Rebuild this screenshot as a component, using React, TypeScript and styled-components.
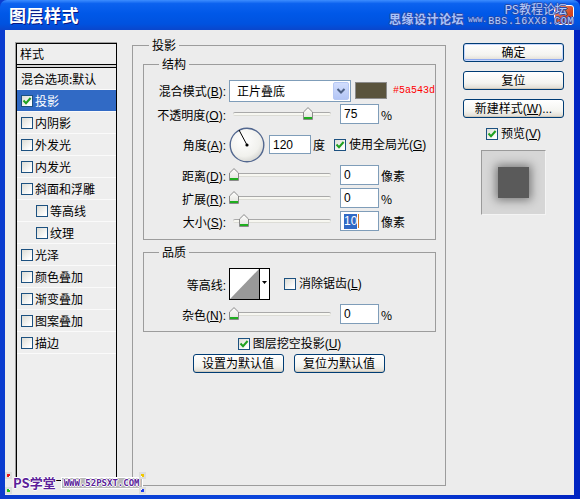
import styled, { createGlobalStyle } from "styled-components";

const FONT = `"Liberation Sans", "Noto Sans CJK SC", sans-serif`;

const GlobalStyle = createGlobalStyle`
  html, body { margin: 0; padding: 0; }
  body { background: #2f5fb8; font-family: ${FONT}; font-size: 12px; color: #000; }
  * { box-sizing: border-box; }
`;

interface StyleItem {
  name: string;
  checked?: boolean;
  active?: boolean;
  sub?: boolean;
}

const styleItems: StyleItem[] = [
  { name: "投影", checked: true, active: true },
  { name: "内阴影" },
  { name: "外发光" },
  { name: "内发光" },
  { name: "斜面和浮雕" },
  { name: "等高线", sub: true },
  { name: "纹理", sub: true },
  { name: "光泽" },
  { name: "颜色叠加" },
  { name: "渐变叠加" },
  { name: "图案叠加" },
  { name: "描边" },
];

const CheckMark = () => (
  <svg width="10" height="10" viewBox="0 0 10 10">
    <path d="M1.5 4.5 L4 7.2 L8.6 2" fill="none" stroke="#21a121" strokeWidth="2" />
  </svg>
);

const Checkbox = ({ checked, ml }: { checked?: boolean; ml?: number }) => (
  <CheckBox $ml={ml}>{checked && <CheckMark />}</CheckBox>
);

const ThumbIcon = () => (
  <svg width="10" height="13" viewBox="0 0 10 13">
    <defs>
      <linearGradient id="tg" x1="0" y1="0" x2="0" y2="1">
        <stop offset="0" stopColor="#ffffff" />
        <stop offset="1" stopColor="#e0e0da" />
      </linearGradient>
    </defs>
    <path d="M0.5 12.5 V5 L5 0.6 L9.5 5 V12.5 Z" fill="url(#tg)" stroke="#8a8a8a" />
    <rect x="1" y="10" width="8" height="2" fill="#1fae1f" />
  </svg>
);

const Slider = ({ left }: { left: number }) => (
  <SliderBox>
    <Track />
    <Thumb $left={left}>
      <ThumbIcon />
    </Thumb>
  </SliderBox>
);

const Dial = () => (
  <DialWrap>
    <svg width="36" height="36" viewBox="0 0 36 36">
      <defs>
        <radialGradient id="dg" cx="0.4" cy="0.35" r="0.7">
          <stop offset="0" stopColor="#ffffff" />
          <stop offset="0.7" stopColor="#f1f1ed" />
          <stop offset="1" stopColor="#d2d2ce" />
        </radialGradient>
      </defs>
      <circle cx="18" cy="18" r="16.8" fill="url(#dg)" stroke="#52678f" strokeWidth="1.4" />
      <line x1="18" y1="18" x2="10" y2="3" stroke="#000" strokeWidth="1" />
      <circle cx="18" cy="18" r="1.6" fill="#000" />
    </svg>
  </DialWrap>
);

const ContourIcon = () => (
  <svg width="41" height="32" viewBox="0 0 41 32">
    <rect x="0.5" y="0.5" width="40" height="31" fill="#fff" stroke="#000" />
    <polygon points="1,31 30,1 30,31" fill="#999" />
    <line x1="30.5" y1="0.5" x2="30.5" y2="31.5" stroke="#000" />
    <polygon points="33,13 38,13 35.5,16" fill="#000" />
  </svg>
);

const Chevron = () => (
  <svg width="10" height="8" viewBox="0 0 10 8">
    <path d="M1.5 2 L5 5.5 L8.5 2" fill="none" stroke="#4d6185" strokeWidth="2" />
  </svg>
);

const App = () => {
  return (
    <>
      <GlobalStyle />
      <Window>
        <TitleBar>
          <Title>图层样式</Title>
          <Mark>
            <SiteName>思缘设计论坛</SiteName>
            <Www>www.</Www>
            <MarkStack>
              <MarkTop>PS教程论坛</MarkTop>
              <MarkBottom>BBS.16XX8.COM</MarkBottom>
            </MarkStack>
          </Mark>
          <CloseBtn />
        </TitleBar>

        <Body>
          <StyleList>
            <ListInner>
              <ListHeader>样式</ListHeader>
              <ListDivider />
              <ListRows>
                <ListRow>混合选项:默认</ListRow>
                {styleItems.map((item) => (
                  <ListRow key={item.name} $active={item.active} $sub={item.sub}>
                    <Checkbox checked={item.checked} />
                    <ListText>{item.name}</ListText>
                  </ListRow>
                ))}
              </ListRows>
            </ListInner>
          </StyleList>

          <Group $h={448}>
            <Legend $ml={16}>投影</Legend>
            <GroupBody>
              <Group>
                <Legend $ml={15}>结构</Legend>
                <Rows>
                  <Row $h={21}>
                    <Label>混合模式(<u>B</u>):</Label>
                    <Select>
                      <span>正片叠底</span>
                      <DropBtn>
                        <Chevron />
                      </DropBtn>
                    </Select>
                    <Swatch />
                    <Hex>#5a543d</Hex>
                  </Row>
                  <Row $h={20}>
                    <Label>不透明度(<u>O</u>):</Label>
                    <Slider left={74} />
                    <Field>75</Field>
                    <Unit>%</Unit>
                  </Row>
                  <Row $h={35}>
                    <Label>角度(<u>A</u>):</Label>
                    <Dial />
                    <Field $w={42} $h={19} $ml={4}>120</Field>
                    <Unit>度</Unit>
                    <Checkbox checked ml={9} />
                    <CheckText>使用全局光(<u>G</u>)</CheckText>
                  </Row>
                  <Row $h={20}>
                    <Label>距离(<u>D</u>):</Label>
                    <Slider left={0} />
                    <Field>0</Field>
                    <Unit>像素</Unit>
                  </Row>
                  <Row $h={20}>
                    <Label>扩展(<u>R</u>):</Label>
                    <Slider left={0} />
                    <Field>0</Field>
                    <Unit>%</Unit>
                  </Row>
                  <Row $h={20}>
                    <Label>大小(<u>S</u>):</Label>
                    <Slider left={10} />
                    <Field>
                      <Selected>10</Selected>
                      <Caret />
                    </Field>
                    <Unit>像素</Unit>
                  </Row>
                </Rows>
              </Group>

              <Group $mt={5}>
                <Legend $ml={15}>品质</Legend>
                <QualityRows>
                  <Row $h={32}>
                    <Label>等高线:</Label>
                    <Contour>
                      <ContourIcon />
                    </Contour>
                    <Checkbox ml={14} />
                    <CheckText>消除锯齿(<u>L</u>)</CheckText>
                  </Row>
                  <Row $h={20}>
                    <Label>杂色(<u>N</u>):</Label>
                    <Slider left={0} />
                    <Field>0</Field>
                    <Unit>%</Unit>
                  </Row>
                </QualityRows>
              </Group>

              <CenterRow $mt={5}>
                <Checkbox checked />
                <CheckText>图层挖空投影(<u>U</u>)</CheckText>
              </CenterRow>
              <ButtonRow>
                <Button $w={91}>设置为默认值</Button>
                <Button $w={91}>复位为默认值</Button>
              </ButtonRow>
            </GroupBody>
          </Group>

          <Side>
            <Button $w={101} $default>确定</Button>
            <Button $w={101}>复位</Button>
            <Button $w={101}>新建样式(<u>W</u>)...</Button>
            <CenterRow $mt={0}>
              <Checkbox checked />
              <CheckText>预览(<u>V</u>)</CheckText>
            </CenterRow>
            <Preview>
              <PreviewSquare />
            </Preview>
          </Side>
        </Body>

        <Stamp>
          <Corner $c="#e8141a" $pos="tl" />
          <Corner $c="#19c219" $pos="bl" />
          <Corner $c="#f0c800" $pos="tr" />
          <Corner $c="#1c3cf0" $pos="br" />
          <StampName>PS学堂</StampName>
          <StampUrl>WWW.52PSXT.COM</StampUrl>
        </Stamp>
      </Window>
    </>
  );
};

export default App;

const Window = styled.div`
  position: relative;
  width: 580px;
  height: 499px;
  display: flex;
  flex-direction: column;
  background: linear-gradient(to right, #0a3ccf, #0b46dc 50%, #0024c2);
  overflow: hidden;
`;

const TitleBar = styled.div`
  position: relative;
  height: 30px;
  flex-shrink: 0;
  display: flex;
  align-items: center;
  padding: 0 6px 0 9px;
  background: linear-gradient(
    to bottom,
    #3d8dff 0%,
    #0c62ef 12%,
    #0058e8 45%,
    #0052df 80%,
    #0a46cc 100%
  );
  border-radius: 7px 7px 0 0;
`;

const Title = styled.div`
  font-family: "Noto Sans CJK SC", sans-serif;
  font-weight: bold;
  font-size: 17px;
  line-height: 20px;
  color: #fff;
  text-shadow: 1px 1px 0 #0a1883;
  letter-spacing: 0.5px;
`;

const Mark = styled.div`
  margin-left: auto;
  display: flex;
  align-items: center;
  position: relative;
  z-index: 1;
`;

const outline = `
  text-shadow: 1px 0 0 #2a4aa8, -1px 0 0 #2a4aa8, 0 1px 0 #2a4aa8, 0 -1px 0 #2a4aa8;
`;

const SiteName = styled.span`
  font-family: "Noto Sans CJK SC", sans-serif;
  font-size: 12px;
  font-weight: bold;
  color: #a9c3fb;
  margin-top: 6px;
  letter-spacing: 0.5px;
  ${outline}
`;

const Www = styled.span`
  font-family: "DejaVu Sans Mono", monospace;
  font-size: 8px;
  color: #a9c3fb;
  margin: 8px 0 0 4px;
  ${outline}
`;

const MarkStack = styled.div`
  display: flex;
  flex-direction: column;
  align-items: flex-end;
  margin-left: 1px;
`;

const MarkTop = styled.span`
  font-family: "Noto Sans CJK SC", sans-serif;
  font-size: 12px;
  line-height: 14px;
  color: #b7cdfb;
  margin-right: 7px;
  ${outline}
`;

const MarkBottom = styled.span`
  font-family: "Liberation Mono", monospace;
  font-size: 10px;
  line-height: 12px;
  color: #b7cdfb;
  letter-spacing: 0.6px;
  ${outline}
`;

const CloseBtn = styled.div`
  position: absolute;
  right: 6px;
  top: 5px;
  width: 20px;
  height: 20px;
  border-radius: 3px;
  border: 1px solid #fff;
  background: linear-gradient(135deg, #e89a80, #d84a25 60%, #c23a12);
`;

const Body = styled.div`
  flex: 1;
  margin: 0 6px 4px 5px;
  background: #ececec;
  display: flex;
  align-items: flex-start;
  padding: 8px 0 0 10px;
`;

const StyleList = styled.div`
  width: 102px;
  height: 439px;
  margin-top: 4px;
  flex-shrink: 0;
  display: flex;
  border: 1px solid #a0a0a0;
  border-right: none;
  border-bottom: none;
`;

const ListInner = styled.div`
  flex: 1;
  border: 1px solid #000;
  background: #eeeeee;
  display: flex;
  flex-direction: column;
  font-family: "Noto Sans CJK SC", sans-serif;
`;

const ListHeader = styled.div`
  height: 21px;
  line-height: 20px;
  padding-left: 3px;
  border-bottom: 1px solid #000;
`;

const ListDivider = styled.div`
  height: 2px;
  background: #d4d4d4;
  border-bottom: 1px solid #000;
  box-sizing: content-box;
`;

const ListRows = styled.div`
  display: flex;
  flex-direction: column;
`;

const ListRow = styled.div<{ $active?: boolean; $sub?: boolean }>`
  height: 22px;
  display: flex;
  align-items: center;
  padding-left: ${(p) => (p.$sub ? 19 : 4)}px;
  border-bottom: 1px solid #fafafa;
  background: ${(p) => (p.$active ? "#316ac5" : "transparent")};
  color: ${(p) => (p.$active ? "#fff" : "#000")};
  white-space: nowrap;
`;

const ListText = styled.span`
  margin-left: 2px;
`;

const CheckBox = styled.span<{ $ml?: number }>`
  display: inline-flex;
  align-items: center;
  justify-content: center;
  width: 12px;
  height: 12px;
  border: 1px solid #1c5180;
  background: linear-gradient(135deg, #dcdcd5, #ffffff 85%);
  margin-left: ${(p) => p.$ml ?? 0}px;
  flex-shrink: 0;
`;

const Group = styled.fieldset<{ $h?: number; $mt?: number }>`
  margin: ${(p) => p.$mt ?? 0}px 0 0 0;
  padding: 0;
  min-width: 0;
  border: 1px solid #9c9c9c;
  ${(p) => (p.$h ? `height: ${p.$h}px; width: 314px; margin-left: 15px; flex-shrink: 0;` : "")}
`;

const Legend = styled.legend<{ $ml: number }>`
  margin-left: ${(p) => p.$ml}px;
  padding: 0 3px;
  line-height: 14px;
  font-size: 12px;
  font-family: "Noto Sans CJK SC", sans-serif;
`;

const GroupBody = styled.div`
  padding: 5px 9px 0 10px;
  display: flex;
  flex-direction: column;
`;

const Rows = styled.div`
  display: flex;
  flex-direction: column;
  gap: 3px;
  padding: 9px 0 8px;
`;

const QualityRows = styled(Rows)`
  gap: 4px;
  padding: 9px 0 7px;
`;

const Row = styled.div<{ $h: number }>`
  height: ${(p) => p.$h}px;
  display: flex;
  align-items: center;
  white-space: nowrap;
`;

const Label = styled.span`
  width: 83px;
  flex-shrink: 0;
  text-align: right;
  padding-right: 1px;
`;

const Select = styled.div`
  width: 122px;
  height: 22px;
  margin-left: 2px;
  border: 1px solid #7f9db9;
  background: #fff;
  display: flex;
  align-items: center;
  justify-content: space-between;
  padding: 0 1px 0 7px;
  font-family: "Noto Sans CJK SC", sans-serif;
`;

const DropBtn = styled.div`
  width: 16px;
  height: 18px;
  border-radius: 2px;
  border: 1px solid #b6c8f4;
  background: linear-gradient(#d2defd, #b3c6f6);
  display: flex;
  align-items: center;
  justify-content: center;
`;

const Swatch = styled.div`
  width: 32px;
  height: 17px;
  margin-left: 4px;
  background: #5a543d;
  border: 1px solid #8c8c8c;
`;

const Hex = styled.span`
  margin-left: 6px;
  color: #ff0000;
  font-family: "Liberation Mono", monospace;
  font-size: 10px;
`;

const SliderBox = styled.div`
  position: relative;
  width: 103px;
  height: 20px;
  margin-left: 2px;
  flex-shrink: 0;
`;

const Track = styled.div`
  position: absolute;
  left: 4px;
  right: 1px;
  top: 8px;
  height: 4px;
  border-radius: 2px;
  background: #f7f7f1;
  border-top: 1px solid #a9a9a9;
  border-bottom: 1px solid #dcdcd6;
`;

const Thumb = styled.div<{ $left: number }>`
  position: absolute;
  left: ${(p) => p.$left}px;
  top: 3px;
  width: 10px;
  height: 13px;
  display: flex;
`;

const DialWrap = styled.div`
  width: 36px;
  height: 36px;
  margin-left: 2px;
  display: flex;
  flex-shrink: 0;
`;

const Field = styled.div<{ $w?: number; $h?: number; $ml?: number }>`
  width: ${(p) => p.$w ?? 39}px;
  height: ${(p) => p.$h ?? 20}px;
  margin-left: ${(p) => p.$ml ?? 8}px;
  border: 1px solid #7f9db9;
  background: #fff;
  padding-left: 3px;
  display: flex;
  align-items: center;
  font-size: 12px;
  flex-shrink: 0;
`;

const Selected = styled.span`
  background: #316ac5;
  color: #fff;
  line-height: 15px;
`;

const Caret = styled.span`
  width: 1px;
  height: 14px;
  background: #d87a20;
  margin-left: 1px;
`;

const Unit = styled.span`
  margin-left: 2px;
  font-family: "Noto Sans CJK SC", sans-serif;
`;

const CheckText = styled.span`
  margin-left: 3px;
  line-height: 14px;
  white-space: nowrap;
`;

const Contour = styled.div`
  width: 41px;
  height: 32px;
  margin-left: 2px;
  display: flex;
  flex-shrink: 0;
`;

const CenterRow = styled.div<{ $mt: number }>`
  display: flex;
  align-items: center;
  justify-content: center;
  height: 14px;
  margin-top: ${(p) => p.$mt}px;
`;

const ButtonRow = styled.div`
  display: flex;
  justify-content: center;
  gap: 10px;
  margin-top: 3px;
  padding-right: 2px;
`;

const Button = styled.button<{ $w: number; $default?: boolean }>`
  width: ${(p) => p.$w}px;
  height: 19px;
  padding: 0;
  border: 1px solid #003c74;
  border-radius: 3px;
  background: linear-gradient(#ffffff, #f4f4f0 65%, #dedad0);
  font-family: ${FONT};
  font-size: 12px;
  line-height: 16px;
  color: #000;
  box-shadow: ${(p) =>
    p.$default
      ? "inset 0 0 0 1px #c6d6fb, inset 0 -1px 0 1px #8faaf0"
      : "inset 0 -1px 0 #d0cabe"};
  white-space: nowrap;
`;

const Side = styled.div`
  width: 101px;
  margin: 5px 0 0 17px;
  display: flex;
  flex-direction: column;
  gap: 9px;
  flex-shrink: 0;
`;

const Preview = styled.div`
  width: 65px;
  height: 65px;
  margin: 0 auto;
  background: #d6d6d6;
  border-top: 1px solid #9a9a9a;
  border-left: 1px solid #9a9a9a;
  border-right: 1px solid #f4f4f4;
  border-bottom: 1px solid #f4f4f4;
  display: flex;
  align-items: center;
  justify-content: center;
`;

const PreviewSquare = styled.div`
  width: 31px;
  height: 31px;
  background: #5a5a5a;
  box-shadow: 0 0 9px 2px rgba(0, 0, 0, 0.45);
`;

const Stamp = styled.div`
  position: absolute;
  left: 5px;
  top: 472px;
  width: 141px;
  height: 22px;
  display: flex;
  align-items: center;
  padding-left: 8px;
`;

const Corner = styled.span<{ $c: string; $pos: "tl" | "bl" | "tr" | "br" }>`
  position: absolute;
  width: 7px;
  height: 7px;
  border: 2px solid #ddd;
  background: #fff;
  ${(p) => (p.$pos[0] === "t" ? "top: 0;" : "bottom: 0;")}
  ${(p) => (p.$pos[1] === "l" ? "left: 0;" : "right: 0;")}
  box-shadow: inset ${(p) => (p.$pos[1] === "l" ? "2px" : "-2px")}
    ${(p) => (p.$pos[0] === "t" ? "2px" : "-2px")} 0 ${(p) => p.$c};
`;

const stampOutline = `
  text-shadow: 1px 0 0 #fff, -1px 0 0 #fff, 0 1px 0 #fff, 0 -1px 0 #fff;
`;

const StampName = styled.span`
  font-family: "Noto Sans CJK SC", sans-serif;
  font-size: 13px;
  font-weight: bold;
  line-height: 14px;
  color: #5b1f9a;
  ${stampOutline}
`;

const StampUrl = styled.span`
  margin-left: 5px;
  padding: 0 2px;
  background: #b8b8b8;
  border: 1px solid #fff;
  font-family: "DejaVu Sans Mono", monospace;
  font-size: 9px;
  font-weight: bold;
  line-height: 10px;
  color: #5b1f9a;
  ${stampOutline}
`;
